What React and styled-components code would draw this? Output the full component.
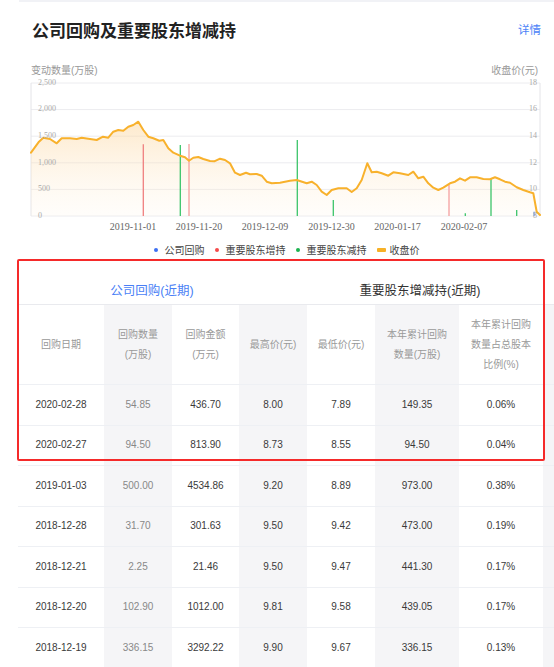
import React from 'react';
import styled, { createGlobalStyle } from 'styled-components';

const GlobalStyle = createGlobalStyle`
  html, body {
    margin: 0;
    padding: 0;
    background: #fff;
  }
  body {
    font-family: "Liberation Sans", "Noto Sans CJK SC", sans-serif;
  }
`;

const Page = styled.div`
  width: 554px;
  overflow: hidden;
`;

const TopRule = styled.div`
  height: 2px;
  margin-left: 19px;
  background: #f1f2f6;
`;

const Header = styled.div`
  height: 54px;
  display: flex;
  align-items: center;
  justify-content: space-between;
  padding: 0 13px 0 32px;
`;

const Title = styled.h2`
  margin: 0;
  font-family: "Noto Sans CJK SC", sans-serif;
  font-size: 17px;
  font-weight: 700;
  color: #222;
`;

const More = styled.a`
  font-family: "Noto Sans CJK SC", sans-serif;
  font-size: 11.5px;
  color: #4d84f7;
  text-decoration: none;
`;

const AxisTitles = styled.div`
  height: 22px;
  box-sizing: border-box;
  padding: 8px 16px 0 31px;
  display: flex;
  justify-content: space-between;
  font-size: 10px;
  line-height: 14px;
  color: #999;
`;

const ChartSvg = styled.svg`
  display: block;
`;

const Legend = styled.div`
  height: 21px;
  box-sizing: border-box;
  padding: 3px 14px 0 33px;
  display: flex;
  justify-content: center;
  gap: 10px;
  font-family: "Noto Sans CJK SC", sans-serif;
  font-size: 10px;
  line-height: 16px;
  color: #444;
`;

const LegendItem = styled.span`
  display: flex;
  align-items: center;
  gap: ${(p) => (p.$bar ? '4px' : '7px')};
`;

const Marker = styled.i`
  display: block;
  width: ${(p) => (p.$bar ? '9px' : '4px')};
  height: 4px;
  border-radius: ${(p) => (p.$bar ? '1px' : '50%')};
  background: ${(p) => p.$color};
`;

const TableWrap = styled.div`
  position: relative;
  margin-left: 18px;
`;

const Tabs = styled.div`
  display: flex;
  height: 46px;
  box-sizing: border-box;
  border-bottom: 1px solid #e9eaee;
`;

const Tab = styled.div`
  flex: 1;
  display: flex;
  align-items: flex-end;
  justify-content: center;
  padding-bottom: 4px;
  font-size: 12.5px;
  line-height: 18px;
  color: ${(p) => (p.$active ? '#4a7ff6' : '#333')};
`;

const Grid = styled.div`
  overflow: hidden;
`;

const Row = styled.div`
  display: grid;
  grid-template-columns: 86px 68px 67px 68px 68px 84px 84px 68px;
  height: ${(p) => (p.$head ? '80px' : '40.5px')};
`;

const Cell = styled.div`
  display: flex;
  align-items: center;
  justify-content: center;
  text-align: center;
  box-sizing: border-box;
  padding: 0 10px;
  border-bottom: 1px solid #eef0f4;
  background: ${(p) => (p.$shade ? '#f5f5f7' : '#fff')};
  font-size: 10px;
  line-height: 20px;
  color: ${(p) => p.$color || '#3a3a3a'};
`;

const Highlight = styled.div`
  position: absolute;
  left: -1px;
  top: 0;
  width: 528px;
  height: 202px;
  box-sizing: border-box;
  border: 2px solid #f52a2a;
  border-radius: 2px;
  pointer-events: none;
`;

const price = [
  [31, 152.7], [39, 141.7], [43.3, 137.7], [50, 139], [56.7, 143.3], [61.7, 138.3], [70, 138.3],
  [76.7, 139], [81.7, 137.7], [88.3, 138.7], [96.7, 140], [103, 136.7], [108.3, 137.7], [113.3, 131.7],
  [118.3, 130], [123.3, 130.7], [128.3, 126.7], [133.3, 125], [138.3, 121.7], [143.3, 130], [148.3, 136.7],
  [153.3, 138.3], [159.3, 140.7], [163.3, 140], [168.3, 148.3], [173.3, 152.7], [180, 155.7], [185, 157.3],
  [189, 160.7], [193.3, 157.7], [198.3, 157], [203.3, 159], [210, 161], [214.3, 161.3], [220, 158.7],
  [225, 160], [230, 163.3], [235, 172.7], [240, 175], [246, 172.7], [250, 174.3], [256.7, 174],
  [261.7, 175.7], [266.7, 181.7], [271.7, 183.3], [280, 182.7], [290, 180.7], [296.7, 180], [306.7, 183.3],
  [311.7, 181.7], [316.7, 185], [321.7, 191.7], [326.7, 195], [331.7, 190], [338.3, 188.3], [346.7, 188.3],
  [351.7, 192], [356.7, 188.3], [361.7, 180], [367.3, 163.3], [371.7, 172.3], [376.7, 171.7], [381.7, 173.3],
  [388.3, 175.7], [393.3, 172.3], [400, 173.3], [408.3, 175], [413.3, 171.7], [418.3, 178.3], [423.3, 176.7],
  [428.3, 183.3], [433.3, 187.7], [438.3, 190], [443.3, 187.7], [450, 183.3], [455, 181.7], [460, 178.3],
  [465, 180.7], [470, 177.3], [476.7, 177.3], [483.3, 179], [490, 179.3], [495, 177.3], [500, 179.3],
  [505, 181.7], [510, 182.7], [516.7, 187.3], [523.3, 190], [530, 192.3], [533.3, 193.3], [536.7, 211.7],
  [540, 215],
];

const bars = [
  { x: 143.3, top: 144.3, color: '#f07f7f' },
  { x: 180.3, top: 145, color: '#3cc46a' },
  { x: 189, top: 144, color: '#f4a0a0' },
  { x: 297.3, top: 140, color: '#3cc46a' },
  { x: 333.3, top: 200, color: '#3cc46a' },
  { x: 449, top: 185, color: '#f4a0a0' },
  { x: 465.3, top: 213.3, color: '#3cc46a' },
  { x: 491, top: 178.3, color: '#3cc46a' },
  { x: 516.7, top: 210, color: '#3cc46a' },
  { x: 534.3, top: 211.7, color: '#8fb0f5', w: 2 },
];

const gridY = [216, 189.4, 162.8, 136.2, 109.6, 83];
const leftLabels = ['0', '500', '1,000', '1,500', '2,000', '2,500'];
const rightLabels = ['8', '10', '12', '14', '16', '18'];
const dates = [
  [133, '2019-11-01'], [199, '2019-11-20'], [265, '2019-12-09'],
  [331.5, '2019-12-30'], [397.5, '2020-01-17'], [464, '2020-02-07'],
];

function Chart() {
  const line = price.map(([x, y]) => `${x},${y}`).join(' ');
  const area = `31,216 ${line} 540,216`;
  return (
    <ChartSvg width="554" height="160" viewBox="0 78 554 160">
      <defs>
        <linearGradient id="areaFill" x1="0" y1="0" x2="0" y2="1">
          <stop offset="0" stopColor="#fbd49a" stopOpacity="0.5" />
          <stop offset="1" stopColor="#fff3e2" stopOpacity="0.15" />
        </linearGradient>
      </defs>
      {gridY.map((y) => (
        <line key={y} x1="31" x2="540" y1={y} y2={y} stroke="#ececef" strokeWidth="1" />
      ))}
      <line x1="31" x2="31" y1="83" y2="216" stroke="#e4e4e8" />
      <line x1="540" x2="540" y1="83" y2="216" stroke="#e4e4e8" />
      <polygon points={area} fill="url(#areaFill)" />
      {bars.map((b) => (
        <line key={b.x} x1={b.x} x2={b.x} y1="216" y2={b.top} stroke={b.color} strokeWidth={b.w || 1.3} />
      ))}
      <polyline points={line} fill="none" stroke="#f8b12c" strokeWidth="2" strokeLinejoin="round" strokeLinecap="round" />
      <g fontFamily="Liberation Serif, serif" fontSize="8" fill="#aaa" dominantBaseline="middle">
        {gridY.map((y, i) => (
          <text key={`l${y}`} x="38" y={y}>{leftLabels[i]}</text>
        ))}
        {gridY.map((y, i) => (
          <text key={`r${y}`} x="537" y={y} textAnchor="end">{rightLabels[i]}</text>
        ))}
      </g>
      <g fontFamily="Liberation Serif, serif" fontSize="10" fill="#666" textAnchor="middle" dominantBaseline="middle">
        {dates.map(([x, d]) => (
          <text key={d} x={x} y="228">{d}</text>
        ))}
      </g>
    </ChartSvg>
  );
}

const heads = [
  '回购日期', '回购数量(万股)', '回购金额(万元)', '最高价(元)', '最低价(元)',
  '本年累计回购数量(万股)', '本年累计回购数量占总股本比例(%)', '',
];

const rows = [
  ['2020-02-28', '54.85', '436.70', '8.00', '7.89', '149.35', '0.06%'],
  ['2020-02-27', '94.50', '813.90', '8.73', '8.55', '94.50', '0.04%'],
  ['2019-01-03', '500.00', '4534.86', '9.20', '8.89', '973.00', '0.38%'],
  ['2018-12-28', '31.70', '301.63', '9.50', '9.42', '473.00', '0.19%'],
  ['2018-12-21', '2.25', '21.46', '9.50', '9.47', '441.30', '0.17%'],
  ['2018-12-20', '102.90', '1012.00', '9.81', '9.58', '439.05', '0.17%'],
  ['2018-12-19', '336.15', '3292.22', '9.90', '9.67', '336.15', '0.13%'],
];

export default function App() {
  return (
    <Page>
      <GlobalStyle />
      <TopRule />
      <Header>
        <Title>公司回购及重要股东增减持</Title>
        <More href="#">详情</More>
      </Header>
      <AxisTitles>
        <span>变动数量(万股)</span>
        <span>收盘价(元)</span>
      </AxisTitles>
      <Chart />
      <Legend>
        <LegendItem><Marker $color="#3d6ff2" />公司回购</LegendItem>
        <LegendItem><Marker $color="#f54a4a" />重要股东增持</LegendItem>
        <LegendItem><Marker $color="#1cb350" />重要股东减持</LegendItem>
        <LegendItem $bar><Marker $bar $color="#f7b126" />收盘价</LegendItem>
      </Legend>
      <TableWrap>
        <Tabs>
          <Tab $active>公司回购(近期)</Tab>
          <Tab>重要股东增减持(近期)</Tab>
        </Tabs>
        <Grid>
          <Row $head>
            {heads.map((h, i) => (
              <Cell key={i} $shade={i % 2 === 1} $color="#999">{h}</Cell>
            ))}
          </Row>
          {rows.map((r) => (
            <Row key={r[0]}>
              {[...r, ''].map((v, i) => (
                <Cell key={i} $shade={i % 2 === 1} $color={i === 1 ? '#888' : undefined}>{v}</Cell>
              ))}
            </Row>
          ))}
        </Grid>
        <Highlight />
      </TableWrap>
    </Page>
  );
}
